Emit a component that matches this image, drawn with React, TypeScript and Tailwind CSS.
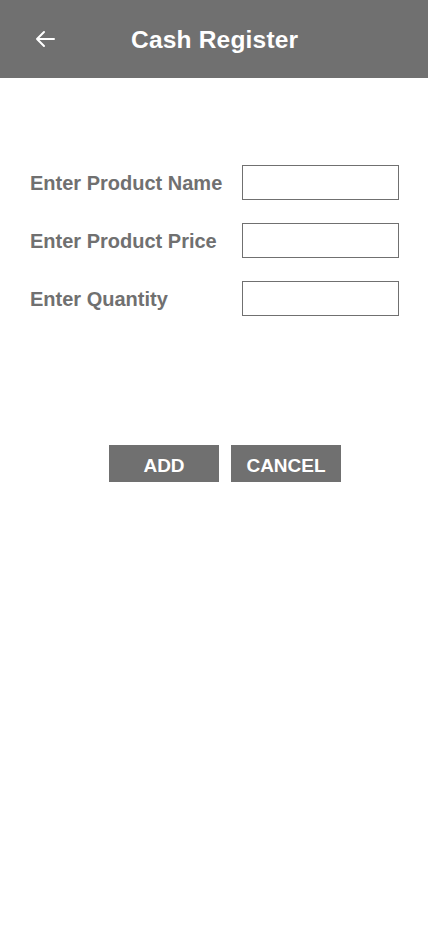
import React from "react";

const fields = ["Enter Product Name", "Enter Product Price", "Enter Quantity"];

const App = () => {
  return (
    <div className="w-full min-h-[926px] bg-white font-['Liberation_Sans',Arial,sans-serif]">
      <header className="h-[78px] bg-[#707070] flex items-center">
        <button className="ml-[34px] w-[22px] h-[22px] flex items-center justify-center text-white">
          <svg width="22" height="22" viewBox="0 0 22 22" fill="none">
            <path
              d="M20 11H3M10 4l-7 7 7 7"
              stroke="white"
              strokeWidth="2"
              strokeLinecap="round"
              strokeLinejoin="round"
            />
          </svg>
        </button>
        <h1 className="ml-[75px] pt-[3px] text-white font-bold text-[24.5px] leading-none tracking-[0.2px]">
          Cash Register
        </h1>
      </header>

      <div className="pt-[87px] pl-[30px] flex flex-col gap-[23px]">
        {fields.map((label) => (
          <div key={label} className="flex items-center">
            <label className="w-[212px] text-[20px] font-bold text-[#707070] leading-none pt-[1px]">
              {label}
            </label>
            <input
              type="text"
              className="w-[157px] h-[35px] border border-[#707070] bg-white outline-none px-2"
            />
          </div>
        ))}
      </div>

      <div className="mt-[129px] pl-[109px] flex gap-[12px]">
        <button className="w-[110px] h-[37px] pt-[3px] bg-[#707070] text-white font-bold text-[19px] leading-none">
          ADD
        </button>
        <button className="w-[110px] h-[37px] pt-[3px] bg-[#707070] text-white font-bold text-[19px] leading-none">
          CANCEL
        </button>
      </div>
    </div>
  );
};

export default App;
